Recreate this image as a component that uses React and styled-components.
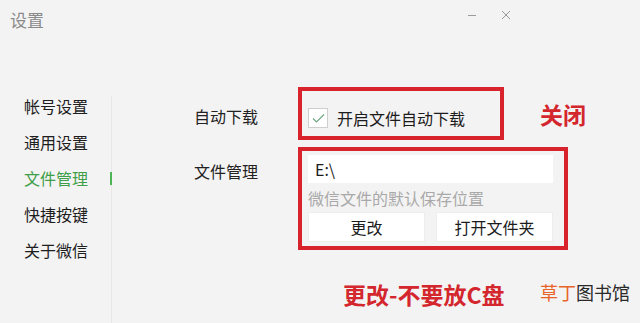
import React from 'react';
import styled, { createGlobalStyle } from 'styled-components';

const GlobalStyle = createGlobalStyle`
  html, body {
    margin: 0;
    padding: 0;
    background: #f4f3f3;
  }
  body {
    font-family: "Noto Sans CJK SC", "Noto Sans", sans-serif;
    color: #222;
  }
`;

const navItems = ['帐号设置', '通用设置', '文件管理', '快捷按键', '关于微信'];

function App() {
    return (
        <Page>
            <GlobalStyle />
            <TitleBar>
                <Title>设置</Title>
                <Controls>
                    <svg width="10" height="10" viewBox="0 0 10 10">
                        <line x1="1" y1="5.5" x2="9" y2="5.5" stroke="#9a9a9a" strokeWidth="1" />
                    </svg>
                    <svg width="10" height="10" viewBox="0 0 10 10">
                        <path d="M1 1 L9 9 M9 1 L1 9" stroke="#9a9a9a" strokeWidth="1" fill="none" />
                    </svg>
                </Controls>
            </TitleBar>

            <Body>
                <Sidebar>
                    {navItems.map((item) => (
                        <NavItem key={item} $active={item === '文件管理'}>
                            <span>{item}</span>
                            {item === '文件管理' && <Marker />}
                        </NavItem>
                    ))}
                </Sidebar>

                <Content>
                    <Row>
                        <Label $top={19}>自动下载</Label>
                        <RedBox $pad="17px 35px 8px 6px">
                            <CheckRow>
                                <CheckBox>
                                    <svg width="13" height="11" viewBox="0 0 13 11">
                                        <polyline points="1,5.5 4.5,9 12,1.5" fill="none" stroke="#6fa883" strokeWidth="1.2" />
                                    </svg>
                                </CheckBox>
                                开启文件自动下载
                            </CheckRow>
                        </RedBox>
                        <Note $top={14}>关闭</Note>
                    </Row>

                    <Row>
                        <Label $top={14}>文件管理</Label>
                        <RedBox $pad="4px 11px 4px 6px">
                            <PathInput>E:\</PathInput>
                            <Hint>微信文件的默认保存位置</Hint>
                            <Buttons>
                                <Button>更改</Button>
                                <Button>打开文件夹</Button>
                            </Buttons>
                        </RedBox>
                    </Row>

                    <Footer>
                        <Note>更改-不要放C盘</Note>
                        <Watermark>
                            <em>草丁</em>图书馆
                        </Watermark>
                    </Footer>
                </Content>
            </Body>
        </Page>
    );
}

const Page = styled.div`
display: flex;
flex-direction: column;
width: 640px;
height: 323px;
overflow: hidden;
`;

const TitleBar = styled.div`
display: flex;
align-items: flex-start;
height: 40px;
`;

const Title = styled.div`
padding: 9px 0 0 10px;
font-size: 17px;
line-height: 22px;
color: #8a8a8a;
`;

const Controls = styled.div`
display: flex;
gap: 24px;
margin: 10px 129px 0 auto;
`;

const Body = styled.div`
display: flex;
flex: 1;
margin-top: 47px;
`;

const Sidebar = styled.div`
display: flex;
flex-direction: column;
gap: 16px;
width: 111px;
margin-top: 9px;
border-right: 1px solid #e8e7e7;
`;

const NavItem = styled.div`
display: flex;
align-items: center;
justify-content: space-between;
padding-left: 24px;
font-size: 16px;
line-height: 20px;
color: ${(p) => (p.$active ? '#3f9e4a' : '#1e1e1e')};
`;

const Marker = styled.i`
width: 2px;
height: 13px;
margin-right: -1px;
background: #4cb556;
`;

const Content = styled.div`
display: flex;
flex-direction: column;
gap: 7px;
flex: 1;
padding: 0 10px 0 82px;
`;

const Row = styled.div`
display: flex;
align-items: flex-start;
`;

const Label = styled.div`
width: 104px;
padding-top: ${(p) => p.$top}px;
font-size: 16px;
line-height: 20px;
color: #222;
`;

const RedBox = styled.div`
border: 4px solid #d9232c;
padding: ${(p) => p.$pad};
`;

const CheckRow = styled.div`
display: flex;
align-items: center;
gap: 9px;
font-size: 16px;
line-height: 19px;
color: #1c1c1c;
`;

const CheckBox = styled.span`
display: flex;
align-items: center;
justify-content: center;
width: 18px;
height: 18px;
border: 1px solid #cfcfcf;
background: #fff;
`;

const Note = styled.div`
margin-left: ${(p) => (p.$top !== undefined ? '36px' : '0')};
padding-top: ${(p) => p.$top || 0}px;
font-size: 23px;
line-height: 26px;
font-weight: 700;
color: #d3262d;
`;

const PathInput = styled.div`
width: 238px;
height: 28px;
padding-left: 7px;
background: #fff;
font-size: 16px;
line-height: 28px;
color: #1c1c1c;
`;

const Hint = styled.div`
margin-top: 5px;
font-size: 16px;
line-height: 20px;
color: #a9a9a9;
`;

const Buttons = styled.div`
display: flex;
gap: 11px;
margin-top: 4px;
`;

const Button = styled.button`
width: 117px;
height: 30px;
border: 1px solid #ededed;
background: #fff;
font-family: inherit;
font-size: 16px;
color: #1c1c1c;
padding: 0;
`;

const Footer = styled.div`
display: flex;
align-items: center;
margin-top: 24px;
padding-left: 149px;
`;

const Watermark = styled.div`
margin: -4px 0 0 auto;
font-size: 18px;
line-height: 22px;
color: #2a2a2a;

em {
    font-style: normal;
    color: #e8632a;
}
`;

export default App;
